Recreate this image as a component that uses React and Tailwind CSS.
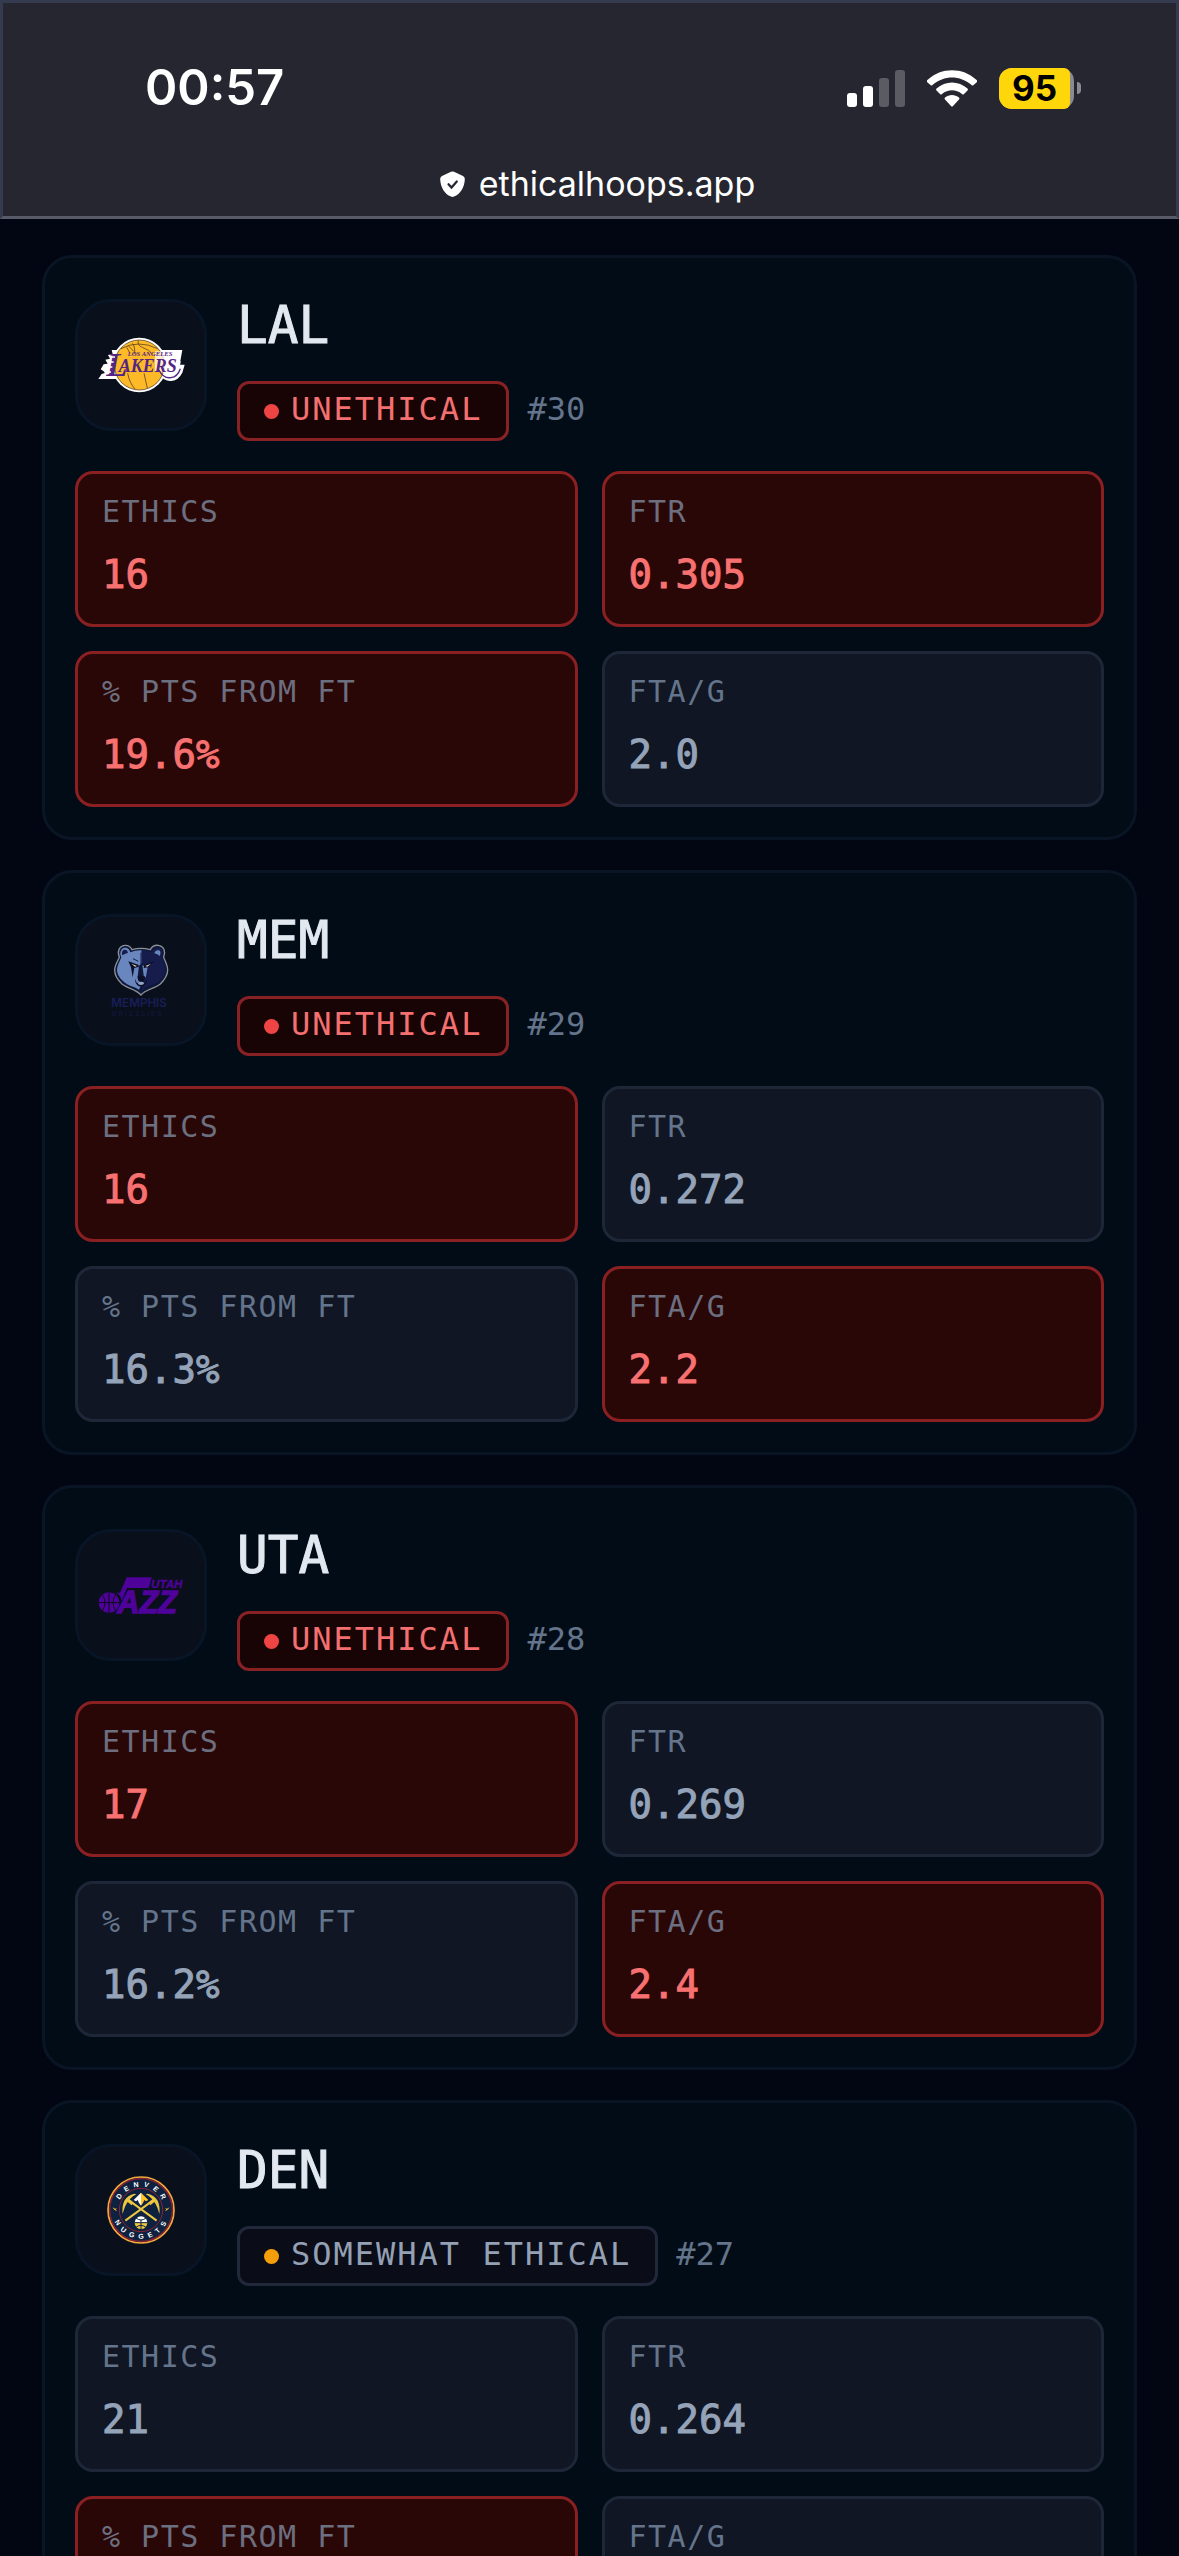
import React from "react";
import clsx from "clsx";

const LakersLogo = () => (
  <svg viewBox="9 36 378 378" className="w-full h-full" aria-hidden="true">
    <circle cx="193" cy="225" r="82" fill="#fff" />
    <path
      d="M110 180H322L314 224H329L322 248Q308 275 284 273Q268 271 256 258L240 267H70L80 252L92 248L77 238L86 223L98 221L91 209L105 206L99 195L113 192Z"
      fill="#fff"
    />
    <circle cx="193" cy="225" r="75" fill="#fdb927" />
    <g fill="none" stroke="#3b2a16" strokeWidth="2">
      <circle cx="193" cy="225" r="75" />
      <path d="M138 176Q190 148 248 176M155 172L164 188M172 160Q182 172 178 192M190 152Q186 166 202 172Q224 180 232 192" />
      <path d="M158 250Q164 280 180 297M207 250L217 294M160 167L176 184" />
    </g>
    <path d="M240 184H312L306 214H318L312 240Q300 262 284 262Q270 258 262 246H240Z" fill="#fff" opacity="0.75" />
    <g fill="#552583" fontFamily="'Liberation Serif', serif" fontWeight="700" fontStyle="italic">
      <text x="94" y="258" fontSize="104">
        L<tspan x="131" y="246" fontSize="54">AKERS</tspan>
      </text>
      <text x="158" y="198" fontSize="20">LOS ANGELES</text>
    </g>
    <path d="M252 240Q264 266 288 263Q308 260 316 236" fill="none" stroke="#552583" strokeWidth="4" />
    <path d="M80 260H112M88 246H108M92 231H112M100 216H116M106 201H120" stroke="#fff" strokeWidth="4" />
  </svg>
);

const GrizzliesLogo = () => (
  <svg viewBox="9 81 378 378" className="w-full h-full" aria-hidden="true">
    <path
      d="M133 202C126 186 132 168 149 166C161 165 168 172 171 179Q198 171 226 179C230 170 238 165 250 166C267 168 273 186 266 202C270 212 278 226 278 240C278 256 268 270 256 282C240 296 212 298 198 315C185 298 158 296 141 282C128 270 119 256 119 240C119 226 128 214 133 202Z"
      fill="#0e1839"
      stroke="#8c9198"
      strokeWidth="4"
    />
    <path
      d="M139 202C132 188 138 174 149 173C160 172 164 180 166 187Q182 180 200 181V218L192 228L188 260L198 286L192 299C180 290 160 288 147 276C134 265 126 252 126 240C126 226 134 216 139 202Z"
      fill="#6a86be"
    />
    <path d="M142 196C139 184 144 179 150 179C156 179 158 184 159 188Q149 192 142 196Z" fill="#161c4c" />
    <path
      d="M200 181Q216 180 230 187C233 179 238 173 249 173C262 174 266 188 260 202C264 214 271 226 271 240C271 256 260 268 249 277C236 286 210 288 198 304L208 274L210 240L200 214Z"
      fill="#161c4c"
    />
    <path d="M238 190C240 182 246 179 252 181C258 184 257 192 254 198Q248 192 238 190Z" fill="#6a86be" />
    <path d="M202 226L218 232L212 264L206 256Z" fill="#6a86be" />
    <path d="M160 214L190 224L192 230L178 234L173 262L168 232ZM238 214L208 224L206 234L220 232Z" fill="#0a0f2a" />
    <path d="M169 221L186 228L180 230ZM228 221L211 228L217 230Z" fill="#f0d7b4" />
    <path d="M187 260Q198 254 210 260L206 272L198 276L190 272ZM180 266Q180 288 198 290Q216 288 216 266L210 280Q198 270 186 280Z" fill="#0a0f2a" />
    <path d="M188 279Q198 272 208 279Q206 285 198 285Q190 285 188 279Z" fill="#93a4c4" />
    <path d="M198 188V222M174 206L190 214" stroke="#161c4c" strokeWidth="3" />
    <g fontFamily="Inter, sans-serif" fontWeight="600">
      <text x="109" y="352" fontSize="35" fill="#181e58">MEMPHIS</text>
      <text x="110" y="378" fontSize="20" fill="#10173a" letterSpacing="6">GRIZZLIES</text>
    </g>
  </svg>
);

const JazzLogo = () => (
  <svg viewBox="9 66 378 378" className="w-full h-full" aria-hidden="true">
    <g fill="#4f0299">
      <path d="M155 202H230L221 234H156L140 272Q136 250 120 248H135Z" />
      <circle cx="102" cy="278" r="31" />
      <g fontFamily="'Liberation Sans Narrow', 'Liberation Sans', sans-serif" fontWeight="700" fontStyle="italic">
        <text x="228" y="234" fontSize="35" stroke="#4f0299">UTAH</text>
      </g>
      <text
        x="127"
        y="308"
        fontSize="92"
        stroke="#4f0299"
        strokeWidth="4"
        fontFamily="'Liberation Sans', sans-serif"
        fontWeight="700"
        fontStyle="italic"
      >
        AZZ
      </text>
    </g>
    <path
      d="M71 278H133M102 247V309M82 254Q98 278 82 302M122 254Q106 278 122 302"
      fill="none"
      stroke="#0a0d18"
      strokeWidth="3"
    />
  </svg>
);

const NuggetsLogo = () => (
  <svg viewBox="9 51 378 378" className="w-full h-full" aria-hidden="true">
    <circle cx="198" cy="240" r="99" fill="#0e2240" stroke="#f6a93b" strokeWidth="5" />
    <circle cx="198" cy="240" r="94" fill="none" stroke="#8b2131" strokeWidth="4" />
    <circle cx="198" cy="240" r="65" fill="none" stroke="#8b2131" strokeWidth="3" />
    <path id="nuggets-top" d="M128 240A70 70 0 0 1 268 240" fill="none" />
    <path id="nuggets-bottom" d="M112 240A86 86 0 0 0 284 240" fill="none" />
    <g fill="#fff" fontFamily="'Liberation Sans', sans-serif" fontWeight="700" fontSize="21" textAnchor="middle">
      <text letterSpacing="14">
        <textPath href="#nuggets-top" startOffset="53%">DENVER</textPath>
      </text>
      <text letterSpacing="15">
        <textPath href="#nuggets-bottom" startOffset="52%">NUGGETS</textPath>
      </text>
    </g>
    <path d="M112 232L120 236L127 234L122 238L126 244L118 239ZM284 232L276 236L269 234L274 238L270 244L278 239Z" fill="#fec524" />
    <path d="M151 272L233 212M245 272L163 212" fill="none" stroke="#edc63f" strokeWidth="6" />
    <path
      d="M178 191Q158 196 148 212Q140 230 143 252Q149 228 158 216L170 226L176 218L164 208Q172 198 184 193ZM218 191Q238 196 248 212Q256 230 253 252Q247 228 238 216L226 226L220 218L232 208Q224 198 212 193Z"
      fill="#edc63f"
    />
    <path d="M198 188L176 210L183 214L188 210L192 219L198 227Z" fill="#fff" />
    <path d="M198 188L220 210L213 214L208 210L204 219L198 227Z" fill="#fec524" />
    <path d="M179 278A19 19 0 0 1 217 278Z" fill="#fff" />
    <path d="M179 278A19 19 0 0 0 217 278Z" fill="#edc63f" />
    <path
      d="M178 278H218M198 270V298M183 264Q198 276 213 264M183 292Q198 280 213 292"
      fill="none"
      stroke="#0e2240"
      strokeWidth="3"
    />
  </svg>
);

const teams = [
  {
    code: "LAL",
    logo: LakersLogo,
    rank: 30,
    verdict: "UNETHICAL",
    stats: [
      { label: "ETHICS", value: "16", flagged: true },
      { label: "FTR", value: "0.305", flagged: true },
      { label: "% PTS FROM FT", value: "19.6%", flagged: true },
      { label: "FTA/G", value: "2.0", flagged: false },
    ],
  },
  {
    code: "MEM",
    logo: GrizzliesLogo,
    rank: 29,
    verdict: "UNETHICAL",
    stats: [
      { label: "ETHICS", value: "16", flagged: true },
      { label: "FTR", value: "0.272", flagged: false },
      { label: "% PTS FROM FT", value: "16.3%", flagged: false },
      { label: "FTA/G", value: "2.2", flagged: true },
    ],
  },
  {
    code: "UTA",
    logo: JazzLogo,
    rank: 28,
    verdict: "UNETHICAL",
    stats: [
      { label: "ETHICS", value: "17", flagged: true },
      { label: "FTR", value: "0.269", flagged: false },
      { label: "% PTS FROM FT", value: "16.2%", flagged: false },
      { label: "FTA/G", value: "2.4", flagged: true },
    ],
  },
  {
    code: "DEN",
    logo: NuggetsLogo,
    rank: 27,
    verdict: "SOMEWHAT ETHICAL",
    stats: [
      { label: "ETHICS", value: "21", flagged: false },
      { label: "FTR", value: "0.264", flagged: false },
      { label: "% PTS FROM FT", value: "18.1%", flagged: true },
      { label: "FTA/G", value: "2.3", flagged: false },
    ],
  },
];

const StatusBar = () => (
  <div className="flex items-center justify-between pl-[142px] pr-[95px] h-[42px]">
    <span className="text-[49px] leading-[60px] font-semibold">00:57</span>
    <div className="flex items-center gap-[22px]">
      <svg viewBox="0 0 58 37" className="w-[58px] h-[37px]" fill="#fff" aria-label="Signal">
        <rect x="0" y="23" width="10" height="14" rx="3" />
        <rect x="16" y="16" width="10" height="21" rx="3" />
        <rect x="32" y="8" width="10" height="29" rx="3" opacity="0.25" />
        <rect x="48" y="0" width="10" height="37" rx="3" opacity="0.25" />
      </svg>
      <svg viewBox="0 0 50 37" className="w-[50px] h-[37px]" fill="#fff" aria-label="Wi-Fi">
        <path d="M1 9.500C14 -3 36 -3 49 9.500Q51 11 49.500 12.500L46.500 15Q45.500 16 44.500 15C33 5 17 5 5.500 15Q4.500 16 3.500 15L0.500 12.500Q-1 11 1 9.500Z" />
        <path d="M9.500 18.500C18.500 10.500 31.500 10.500 40.500 18.500Q41.500 19.500 40.500 20.500L37 24Q36 25 35 24C29 19 21 19 15 24Q14 25 13 24L9.500 20.500Q8.500 19.500 9.500 18.500Z" />
        <path d="M18 27.500C22 24 28 24 32 27.500Q33 28.500 32 29.500L26 36Q25 37 24 36L18 29.500Q17 28.500 18 27.500Z" />
      </svg>
      <div className="flex items-center gap-[3px]">
        <div className="w-[75px] h-[41px] rounded-[13px] bg-[#8a8a90]">
          <span className="block w-[71px] rounded-l-[13px] rounded-r-md bg-[#ffd60a] text-black text-center text-[35px] leading-[41px] font-bold">
            95
          </span>
        </div>
        <div className="w-1 h-3 rounded-r-full bg-[#8a8a90]"></div>
      </div>
    </div>
  </div>
);

const AddressBar = () => (
  <button type="button" className="flex items-center gap-[14px] mx-auto mt-[51px] pl-4">
    <svg viewBox="0 0 25 26" className="w-[25px] h-[26px]" aria-hidden="true">
      <path
        d="M11 0.800Q12.500 0 14 0.800L23 5Q25 6 24.800 8.500C24.500 16 20.500 23 14 25.600Q12.500 26.300 11 25.600C4.500 23 0.500 16 0.200 8.500Q0 6 2 5Z"
        fill="#fff"
      />
      <path d="M8.500 13.200L11.500 16.500L16.800 10.500" fill="none" stroke="#25262f" strokeWidth="2.200" strokeLinecap="round" />
    </svg>
    <span className="text-[34px] leading-[48px]">ethicalhoops.app</span>
  </button>
);

const VerdictBadge = ({ verdict }) => {
  const unethical = verdict === "UNETHICAL";

  return (
    <span
      className={clsx(
        "inline-flex items-center gap-3 h-[60px] px-6 border-3 rounded-xl text-[32px] tracking-[2px]",
        unethical
          ? "bg-[#180405] border-[#872124] text-[#f47070]"
          : "bg-[#0a0c18] border-[#20283a] text-[#94a0b4]"
      )}
    >
      <span className={clsx("w-[15px] h-[15px] rounded-full", unethical ? "bg-[#ef4444]" : "bg-[#f59e0b]")}></span>
      <span className="leading-[50px] pb-1">{verdict}</span>
    </span>
  );
};

const StatTile = ({ label, value, flagged }) => (
  <div
    className={clsx(
      "flex flex-col gap-3 px-6 py-[18px] border-3 rounded-[18px]",
      flagged ? "bg-[#2a0707] border-[#8b2023]" : "bg-[#101624] border-[#1d2738]"
    )}
  >
    <dt className={clsx("text-[30px] leading-[40px] tracking-wider", flagged ? "text-[#6c6f80]" : "text-[#64748b]")}>
      {label}
    </dt>
    <dd
      className={clsx(
        "text-[39px] leading-[62px] [-webkit-text-stroke:1px]",
        flagged ? "text-[#f87171]" : "text-[#94a3b8]"
      )}
    >
      {value}
    </dd>
  </div>
);

const TeamCard = ({ team }) => (
  <article className="p-[30px] border-3 border-[#091524] rounded-[30px] bg-[#020c16]">
    <div className="flex items-center gap-[30px] mb-[30px]">
      <div className="w-[132px] h-[132px] shrink-0 border-3 border-[#081526] rounded-[36px] bg-[#090f1b]">
        <team.logo />
      </div>
      <div>
        <h2 className="text-[51px] leading-[76px] mb-[17px] text-[#e2e8f0] [-webkit-text-stroke:1px]">{team.code}</h2>
        <div className="flex items-center gap-[18px]">
          <VerdictBadge verdict={team.verdict} />
          <span className="text-[32px] leading-[50px] pb-1 text-[#64748b]">#{team.rank}</span>
        </div>
      </div>
    </div>
    <dl className="grid grid-cols-2 gap-6">
      {team.stats.map((stat) => (
        <StatTile key={stat.label} {...stat} />
      ))}
    </dl>
  </article>
);

const App = () => {
  return (
    <div className="flex flex-col h-screen bg-[#010612]">
      <header className="shrink-0 h-[219px] pt-[64px] border-3 border-[#353b4e] border-b-[#5a5b68] bg-[#25262f] text-white font-['Inter',sans-serif]">
        <StatusBar />
        <AddressBar />
      </header>
      <main className="flex-1 min-h-0 overflow-y-auto [scrollbar-width:none] px-[42px] pt-9 font-['DejaVu_Sans_Mono',monospace]">
        <div className="flex flex-col gap-[30px]">
          {teams.map((team) => (
            <TeamCard key={team.code} team={team} />
          ))}
        </div>
      </main>
    </div>
  );
};

export default App;
